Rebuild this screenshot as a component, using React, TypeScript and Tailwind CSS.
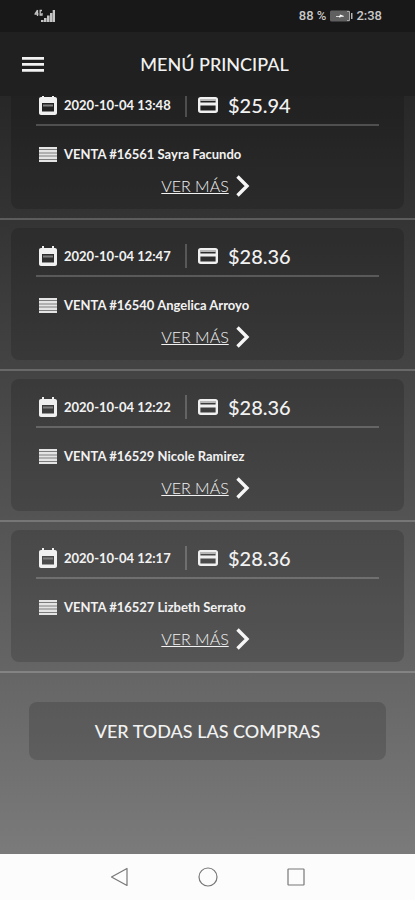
type Sale = {
  id: number;
  date: string;
  total: string;
  customer: string;
};

const sales: Sale[] = [
  { id: 16561, date: "2020-10-04 13:48", total: "$25.94", customer: "Sayra Facundo" },
  { id: 16540, date: "2020-10-04 12:47", total: "$28.36", customer: "Angelica Arroyo" },
  { id: 16529, date: "2020-10-04 12:22", total: "$28.36", customer: "Nicole Ramirez" },
  { id: 16527, date: "2020-10-04 12:17", total: "$28.36", customer: "Lizbeth Serrato" },
];

/* ── Icons ───────────────────────────────────────────────────────────────── */
const SignalIcon = () => (
  <svg viewBox="0 0 22 14" className="h-3.5 w-[22px]" fill="#c4c4c4">
    <path d="M3.500 1v6M.5 5h4M1 5l2.500-4" stroke="#c4c4c4" strokeWidth="1.300" fill="none" />
    <path d="M8 1.500H6.200V6H8V4" stroke="#c4c4c4" strokeWidth="1.300" fill="none" />
    <path d="M7 11h2.600v2H7zM10 9h2.600v4H10zM13 6.500h2.600V13H13zM16 4h2.400v9H16zM18.700 1h2.300v12h-2.300z" />
  </svg>
);

const BatteryIcon = () => (
  <svg viewBox="0 0 24 12" className="h-3 w-6">
    <rect x="1" y="0.500" width="20" height="11" rx="1.500" fill="#606060" />
    <path d="M18 1.500h2.500v9H18" stroke="#a8a8a8" fill="none" />
    <rect x="22" y="3" width="1.500" height="6" fill="#b4b4b4" />
    <path d="M7 6h3.500L11 4.500 15 6l-.5.800h-3L11 8l-1-1.200H7z" fill="#fff" />
  </svg>
);

const MenuIcon = () => (
  <svg viewBox="0 0 22 15" className="h-[15px] w-[22px]" fill="#f2f2f2">
    <path d="M0 0h22v2.800H0zM0 6h22v2.800H0zM0 12h22v2.800H0z" />
  </svg>
);

const CalendarIcon = () => (
  <svg viewBox="0 0 18 20" className="h-5 w-[18px] shrink-0">
    <path
      d="M16 2h-1V0h-2v2H5V0H3v2H2C.9 2 0 2.900 0 4v14c0 1.100.9 2 2 2h14c1.100 0 2-.9 2-2V4c0-1.100-.9-2-2-2zm-1 14.500H3V8h12z"
      fill="#f0f0f0"
    />
    <path d="M4 9.500h10v2H4z" fill="#808080" />
  </svg>
);

const CardIcon = () => (
  <svg viewBox="0 0 20 16" className="h-4 w-5 shrink-0">
    <rect x="1.200" y="1.200" width="17.600" height="13.600" rx="1.500" fill="none" stroke="#f0f0f0" strokeWidth="2.400" />
    <path d="M2 2h16v2H2z" fill="#b8b8b8" />
    <path d="M2 5.500h16v3H2z" fill="#f0f0f0" />
  </svg>
);

const LinesIcon = () => (
  <svg viewBox="0 0 18 15" className="h-[15px] w-[18px] shrink-0">
    <path d="M0 0h18v15H0z" fill="#7c7c7c" />
    <path d="M0 0h18v2H0zM0 3h18v2.500H0zM0 6.500h18v2H0zM0 9.500h18V12H0zM0 13h18v2H0z" fill="#e4e4e4" />
  </svg>
);

const ChevronIcon = () => (
  <svg viewBox="0 0 14 22" className="h-[22px] w-3.5" fill="none" stroke="#f6f6f6" strokeWidth="3.400">
    <path d="M1.500 1.500 11 11l-9.500 9.500" />
  </svg>
);

/* ── One purchase ────────────────────────────────────────────────────────── */
const SaleItem = ({ sale }: { sale: Sale }) => (
  <li className="border-b-2 border-white/20 px-[11px] pt-2 pb-[9px]">
    <article className="rounded-lg bg-black/15 px-[25px] pt-3.5 pb-[7px]">
      <div className="flex h-[35px] items-start border-b-2 border-white/20">
        <div className="flex h-7 items-center pl-[3px]">
          <CalendarIcon />
          <time className="ml-[7px] w-[113px] text-[13px] leading-4 font-bold whitespace-nowrap">
            {sale.date}
          </time>
          <span className="ml-2 h-6 w-0.5 bg-white/20" />
          <span className="ml-[11px]">
            <CardIcon />
          </span>
          <span className="ml-2.5 text-xl leading-4 font-medium">{sale.total}</span>
        </div>
      </div>
      <p className="mt-[18px] flex h-5 items-center gap-[7px] pl-[3px] text-[13px] leading-4 font-bold">
        <LinesIcon />
        VENTA #{sale.id} {sale.customer}
      </p>
      <a href="#venta" className="mt-1.5 flex h-8 items-center justify-center gap-[7px] pr-1">
        <span className="text-base font-light underline">VER MÁS</span>
        <ChevronIcon />
      </a>
    </article>
  </li>
);

const App = () => {
  return (
    <div className="flex h-screen flex-col bg-linear-to-b from-[#1e1e1e] to-[#808080] font-[Lato,sans-serif] text-[#f2f2f2]">
      {/* Status bar */}
      <div className="flex h-8 shrink-0 items-center justify-between bg-[#181818] pr-[33px] pl-[34px] font-[Roboto,sans-serif] text-[13px] font-medium text-[#c8c8c8]">
        <SignalIcon />
        <div className="flex items-center gap-[3px]">
          <span>88 %</span>
          <BatteryIcon />
          <span>2:38</span>
        </div>
      </div>

      {/* Header */}
      <header className="grid h-16 shrink-0 grid-cols-[50px_1fr_36px] items-center bg-[#202020] px-2">
        <button type="button" aria-label="Menú" className="flex justify-center">
          <MenuIcon />
        </button>
        <h1 className="text-center text-lg font-medium">MENÚ PRINCIPAL</h1>
      </header>

      {/* Purchases */}
      <main className="min-h-0 flex-1 overflow-hidden">
        <ul className="-mt-[27px]">
          {sales.map((sale) => (
            <SaleItem key={sale.id} sale={sale} />
          ))}
        </ul>
        <div className="px-[29px] pt-[29px]">
          <button type="button" className="h-[58px] w-full rounded-lg bg-black/15 text-lg font-medium">
            VER TODAS LAS COMPRAS
          </button>
        </div>
      </main>

      {/* System navigation */}
      <nav className="flex h-[46px] shrink-0 items-center justify-center gap-16 bg-[#fcfcfc] text-[#777]">
        <button type="button" aria-label="Atrás">
          <svg viewBox="0 0 24 24" className="size-6" fill="none" stroke="currentColor" strokeWidth="1.200" strokeLinejoin="round">
            <path d="M19 3.500v17L3.500 12z" />
          </svg>
        </button>
        <button type="button" aria-label="Inicio">
          <svg viewBox="0 0 24 24" className="size-6" fill="none" stroke="currentColor" strokeWidth="1.200">
            <circle cx="12" cy="12" r="9" />
          </svg>
        </button>
        <button type="button" aria-label="Recientes">
          <svg viewBox="0 0 24 24" className="size-6" fill="none" stroke="currentColor" strokeWidth="1.200">
            <rect x="4" y="4" width="16" height="16" rx="0.500" />
          </svg>
        </button>
      </nav>
    </div>
  );
};

export default App;
